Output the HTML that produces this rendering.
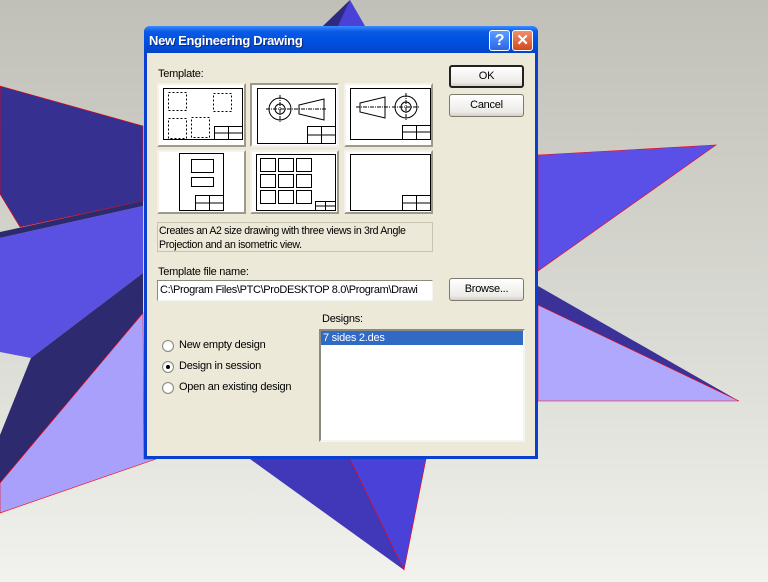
<!DOCTYPE html>
<html><head><meta charset="utf-8"><style>
*{margin:0;padding:0;box-sizing:border-box}
body{width:768px;height:582px;overflow:hidden;position:relative;font-family:"Liberation Sans",Tahoma,sans-serif;font-size:11px;letter-spacing:-0.25px;color:#000;background:linear-gradient(#c0c0b8,#dcdcd6 60%,#f2f2ee)}
.a{position:absolute}
.dlg{left:144px;top:26px;width:394px;height:433px;background:#0a3fd0;border-radius:6px 6px 0 0}
.title{left:0;top:0;width:394px;height:27px;border-radius:6px 6px 0 0;background:linear-gradient(#3b8cff,#0a5ae6 20%,#0050e0 60%,#0344c8)}
.title span{position:absolute;left:5px;top:7px;color:#fff;font-weight:bold;font-size:13px;letter-spacing:-0.3px;text-shadow:1px 1px #0a2a80}
.body{left:3px;top:27px;width:388px;height:403px;background:#ece9d8}
.tb{width:21px;height:21px;border:1px solid #fff;border-radius:3px;color:#fff;font-weight:bold;text-align:center;font-size:16px;line-height:19px}
.btn{width:75px;height:23px;border:1px solid #7a7a70;background:linear-gradient(#fff,#ecebe6 80%,#d6d0c5);border-radius:3px;text-align:center;line-height:21px}
.tile{width:89px;height:64px;background:#fff;border:2px solid;border-color:#f4f2ea #9d9a8c #9d9a8c #f4f2ea}
.tile svg{position:absolute;left:0;top:0}
.radio{width:12px;height:12px;border-radius:50%;border:1px solid #8a8a80;background:radial-gradient(#fff 50%,#d8d6cc)}
</style></head><body>
<svg class="a" style="left:0;top:0" width="768" height="582">
<polygon points="323,26 350,0 365,26" fill="#4a42d8"/>
<polygon points="323,26 350,0 338,26" fill="#2e2a80"/>
<polygon points="0,86 143,126 143,201 20,227 0,194" fill="#363090" stroke="#f00" stroke-width="0.6"/>
<polygon points="0,232 143,201 143,206 0,238" fill="#2e2a70"/>
<polygon points="0,238 143,206 143,273 31,358 0,352" fill="#5a50e2"/>
<polygon points="31,358 143,273 143,313 0,483 0,435" fill="#2e2a70"/>
<polygon points="0,483 143,313 144,459 156,459 0,513" fill="#a8a0fa" stroke="#f00" stroke-width="0.6"/>
<polygon points="538,155 716,145 538,271" fill="#5a50e8" stroke="#f00" stroke-width="0.6"/>
<polygon points="538,286 739,401 538,305" fill="#3a3298"/>
<polygon points="538,305 739,401 538,401" fill="#b0a8fc" stroke="#f00" stroke-width="0.6"/>
<polygon points="250,459 404,570 426,459" fill="#4038b8"/>
<polygon points="350,459 404,570 426,459" fill="#4a42d8" stroke="#f00" stroke-width="0.6"/>
</svg>
<div class="a dlg">
 <div class="a title"><span>New Engineering Drawing</span>
  <div class="a tb" style="left:345px;top:4px;background:linear-gradient(#5c9cff,#2a66e8)">?</div>
  <div class="a tb" style="left:368px;top:4px;background:linear-gradient(#f0906c,#d2481e);font-size:15px">✕</div>
 </div>
 <div class="a body">
  <div class="a" style="left:11px;top:15px">Template:</div>
  <div class="a tile" style="left:10px;top:30px"><svg width="85" height="60"><g fill="none" stroke="#000"><rect x="4.5" y="3.5" width="79" height="51"/><g stroke-dasharray="2,2"><rect x="9.5" y="7.5" width="18" height="18"/><rect x="54.5" y="8.5" width="18" height="18"/><rect x="9.5" y="33.5" width="18" height="20"/><rect x="32.5" y="32.5" width="18" height="20"/></g><rect x="55.5" y="41.5" width="28" height="13"/><path d="M55 48h28M69.5 41v13"/></g></svg></div>
  <div class="a tile" style="left:103px;top:30px;border-color:#9d9a8c #f4f2ea #f4f2ea #9d9a8c;background:#fff"><svg width="85" height="60"><g fill="none" stroke="#000"><rect x="5.5" y="3.5" width="78" height="55"/><circle cx="28" cy="24" r="11"/><circle cx="28" cy="24" r="5"/><path d="M14 24h28M28 10v28" stroke-dasharray="4,1,1,1"/><path d="M47 20l25-6v21l-25-6z"/><path d="M42 24h32" stroke-dasharray="4,1,1,1"/><rect x="55.5" y="41.5" width="28" height="17"/><path d="M55 50h28M69.5 41v17"/></g></svg></div>
  <div class="a tile" style="left:197px;top:30px"><svg width="85" height="60"><g fill="none" stroke="#000"><rect x="4.5" y="3.5" width="80" height="51"/><circle cx="60" cy="22" r="11"/><circle cx="60" cy="22" r="5"/><path d="M46 22h28M60 8v28" stroke-dasharray="4,1,1,1"/><path d="M14 18l25-6v21l-25-6z"/><path d="M10 22h34" stroke-dasharray="4,1,1,1"/><rect x="56.5" y="40.5" width="28" height="14"/><path d="M56 47h28M70.5 40v14"/></g></svg></div>
  <div class="a tile" style="left:10px;top:97px"><svg width="85" height="60"><g fill="none" stroke="#000"><rect x="20.5" y="1.5" width="44" height="57"/><rect x="32.5" y="7.5" width="22" height="13"/><rect x="32.5" y="25.5" width="22" height="9"/><rect x="36.5" y="43.5" width="28" height="15"/><path d="M36 51h28M50.5 43v15"/></g></svg></div>
  <div class="a tile" style="left:103px;top:97px"><svg width="85" height="60"><g fill="none" stroke="#000"><rect x="4.5" y="2.5" width="79" height="56"/><rect x="8.5" y="6.5" width="15" height="13"/><rect x="26.5" y="6.5" width="15" height="13"/><rect x="44.5" y="6.5" width="15" height="13"/><rect x="8.5" y="22.5" width="15" height="13"/><rect x="26.5" y="22.5" width="15" height="13"/><rect x="44.5" y="22.5" width="15" height="13"/><rect x="8.5" y="38.5" width="15" height="13"/><rect x="26.5" y="38.5" width="15" height="13"/><rect x="44.5" y="38.5" width="15" height="13"/><rect x="63.5" y="49.5" width="20" height="9"/><path d="M63 54h20M73.5 49v9"/></g></svg></div>
  <div class="a tile" style="left:197px;top:97px"><svg width="85" height="60"><g fill="none" stroke="#000"><rect x="4.5" y="2.5" width="80" height="56"/><rect x="56.5" y="43.5" width="28" height="15"/><path d="M56 51h28M70.5 43v15"/></g></svg></div>
  <div class="a" style="left:10px;top:169px;width:276px;height:30px;border:1px solid #c8c4b4;line-height:14px;padding:1px 1px;font-size:10.6px;letter-spacing:-0.35px">Creates an A2 size drawing with three views in 3rd Angle Projection and an isometric view.</div>
  <div class="a" style="left:11px;top:213px">Template file name:</div>
  <div class="a" style="left:10px;top:227px;width:276px;height:21px;background:#fff;border:1px solid;border-color:#8a8a80 #f4f4f0 #f4f4f0 #8a8a80;padding:3px 2px;white-space:nowrap;overflow:hidden;letter-spacing:-0.35px">C:\Program Files\PTC\ProDESKTOP 8.0\Program\Drawi</div>
  <div class="a btn" style="left:302px;top:12px;border:2px solid #222;line-height:19px">OK</div>
  <div class="a btn" style="left:302px;top:41px">Cancel</div>
  <div class="a btn" style="left:302px;top:225px">Browse...</div>
  <div class="a" style="left:175px;top:260px">Designs:</div>
  <div class="a" style="left:172px;top:276px;width:206px;height:113px;background:#fff;border:2px solid;border-color:#8a8a80 #f4f4f0 #f4f4f0 #8a8a80"><div style="background:#316ac5;color:#fff;height:14px;line-height:14px;padding-left:2px">7 sides 2.des</div></div>
  <div class="a radio" style="left:15px;top:287px"></div><div class="a" style="left:32px;top:286px">New empty design</div>
  <div class="a radio" style="left:15px;top:308px"><div style="position:absolute;left:3px;top:3px;width:4px;height:4px;border-radius:50%;background:#000"></div></div><div class="a" style="left:32px;top:307px">Design in session</div>
  <div class="a radio" style="left:15px;top:329px"></div><div class="a" style="left:32px;top:328px">Open an existing design</div>
 </div>
</div>
</body></html>
